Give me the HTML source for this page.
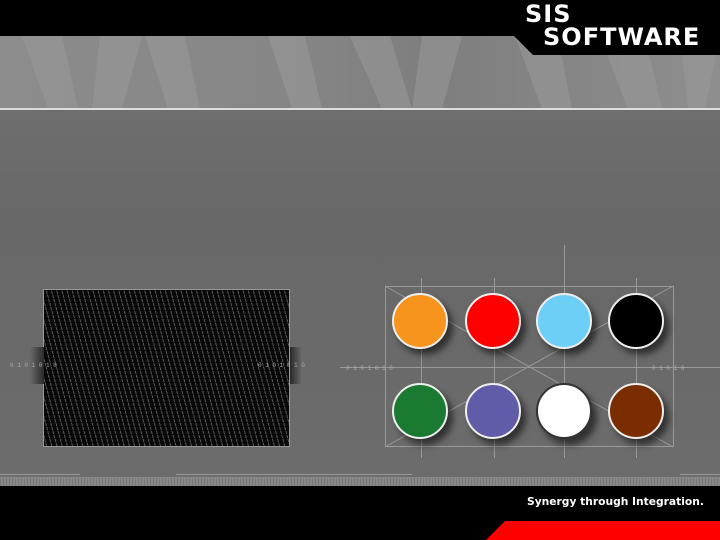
<!DOCTYPE html>
<html><head><style>
body{margin:0;width:720px;height:540px;overflow:hidden;background:#6a6a6a;position:relative;font-family:"Liberation Sans",sans-serif}
div{position:absolute}
.c{width:56px;height:56px;border-radius:50%;border:2px solid #eee;box-shadow:5px 6px 7px rgba(0,0,0,.55);box-sizing:border-box}
</style></head><body>
<div style="left:0;top:0;width:720px;height:36px;background:#000"></div>
<div style="left:0;top:36px;width:720px;height:73px;background:linear-gradient(90deg,#8c8c8c,#868686 40%,#7e7e7e 60%,#8e8e8e)"></div>
<svg style="position:absolute;left:0;top:36px" width="720" height="73">
<g fill="#9a9a9a" opacity=".55">
<polygon points="22,0 62,0 78,73 48,73"/><polygon points="100,0 142,0 122,73 92,73"/>
<polygon points="145,0 185,0 200,73 168,73"/><polygon points="268,0 305,0 322,73 292,73"/>
<polygon points="350,0 390,0 412,73 382,73"/><polygon points="422,0 462,0 442,73 412,73"/>
<polygon points="515,0 558,0 572,73 542,73"/><polygon points="600,0 645,0 662,73 628,73"/>
<polygon points="680,0 720,0 705,73 688,73"/></g></svg>
<div style="left:0;top:108px;width:720px;height:2px;background:#ddd"></div>
<div style="left:0;top:110px;width:720px;height:367px;background:linear-gradient(180deg,#6e6e6e,#686868 30%,#6c6c6c)"></div>
<svg style="position:absolute;left:0;top:36px" width="720" height="20"><polygon points="514,0 720,0 720,19 533,19" fill="#000"/></svg>
<div style="left:525px;top:2px;color:#fff;font-family:'DejaVu Sans',sans-serif;font-weight:bold;font-size:24px;line-height:24px;letter-spacing:1px">SIS</div>
<div style="left:543px;top:25px;color:#fff;font-family:'DejaVu Sans',sans-serif;font-weight:bold;font-size:24px;line-height:24px;letter-spacing:1px">SOFTWARE</div>
<div style="left:43px;top:289px;width:247px;height:158px;background:repeating-linear-gradient(0deg,transparent 0 3px,rgba(0,0,0,.6) 3px 4px),repeating-linear-gradient(75deg,#0a0a0a 0 2px,#555 2px 3px,#0a0a0a 3px 5px),#111;border:1px solid #999;box-sizing:border-box"></div>
<div style="left:30px;top:347px;width:14px;height:37px;background:linear-gradient(90deg,#6a6a6a,#2a2a2a)"></div>
<div style="left:290px;top:347px;width:12px;height:37px;background:linear-gradient(90deg,#2a2a2a,#6a6a6a)"></div>
<svg style="position:absolute;left:0;top:0" width="720" height="540">
<g stroke="#999" fill="none" stroke-width="1">
<rect x="385.5" y="286.5" width="288" height="160"/>
<line x1="340" y1="367.5" x2="720" y2="367.5"/>
<line x1="421.5" y1="278" x2="421.5" y2="458"/><line x1="494.5" y1="278" x2="494.5" y2="458"/>
<line x1="564.5" y1="245" x2="564.5" y2="458"/><line x1="636.5" y1="278" x2="636.5" y2="458"/>
<line x1="385" y1="286" x2="673" y2="447"/><line x1="673" y1="286" x2="385" y2="447"/>
<line x1="0" y1="474.5" x2="80" y2="474.5"/><line x1="176" y1="474.5" x2="412" y2="474.5"/><line x1="680" y1="474.5" x2="720" y2="474.5"/>
</g>
<rect x="0" y="477" width="720" height="9" fill="#888"/>
<g fill="#aaa" font-size="6" font-family="Liberation Mono">
<text x="10" y="367">0 1 0 1 0 1 0</text><text x="258" y="367">0 1 0 1 0 1 0</text>
<text x="346" y="370">0 1 0 1 0 1 0</text><text x="652" y="370">0 1 0 1 0</text></g>
</svg>
<div style="left:0;top:478px;width:720px;height:8px;background:repeating-linear-gradient(90deg,#777 0 1px,transparent 1px 3px)"></div>
<div class="c" style="left:392px;top:293px;background:#f7941d"></div>
<div class="c" style="left:465px;top:293px;background:#ff0000"></div>
<div class="c" style="left:536px;top:293px;background:#6dcff6"></div>
<div class="c" style="left:608px;top:293px;background:#000"></div>
<div class="c" style="left:392px;top:383px;background:#1a7a32"></div>
<div class="c" style="left:465px;top:383px;background:#605ca8"></div>
<div class="c" style="left:536px;top:383px;background:#fff;border-color:#333"></div>
<div class="c" style="left:608px;top:383px;background:#7a2e00"></div>
<div style="left:0;top:486px;width:720px;height:54px;background:#000"></div>
<svg style="position:absolute;left:0;top:521px" width="720" height="19"><polygon points="505,0 720,0 720,19 486,19" fill="#ff0000"/></svg>
<div style="left:527px;top:495px;color:#fff;font-family:'DejaVu Sans',sans-serif;font-weight:bold;font-size:10.7px">Synergy through Integration.</div>
</body></html>
